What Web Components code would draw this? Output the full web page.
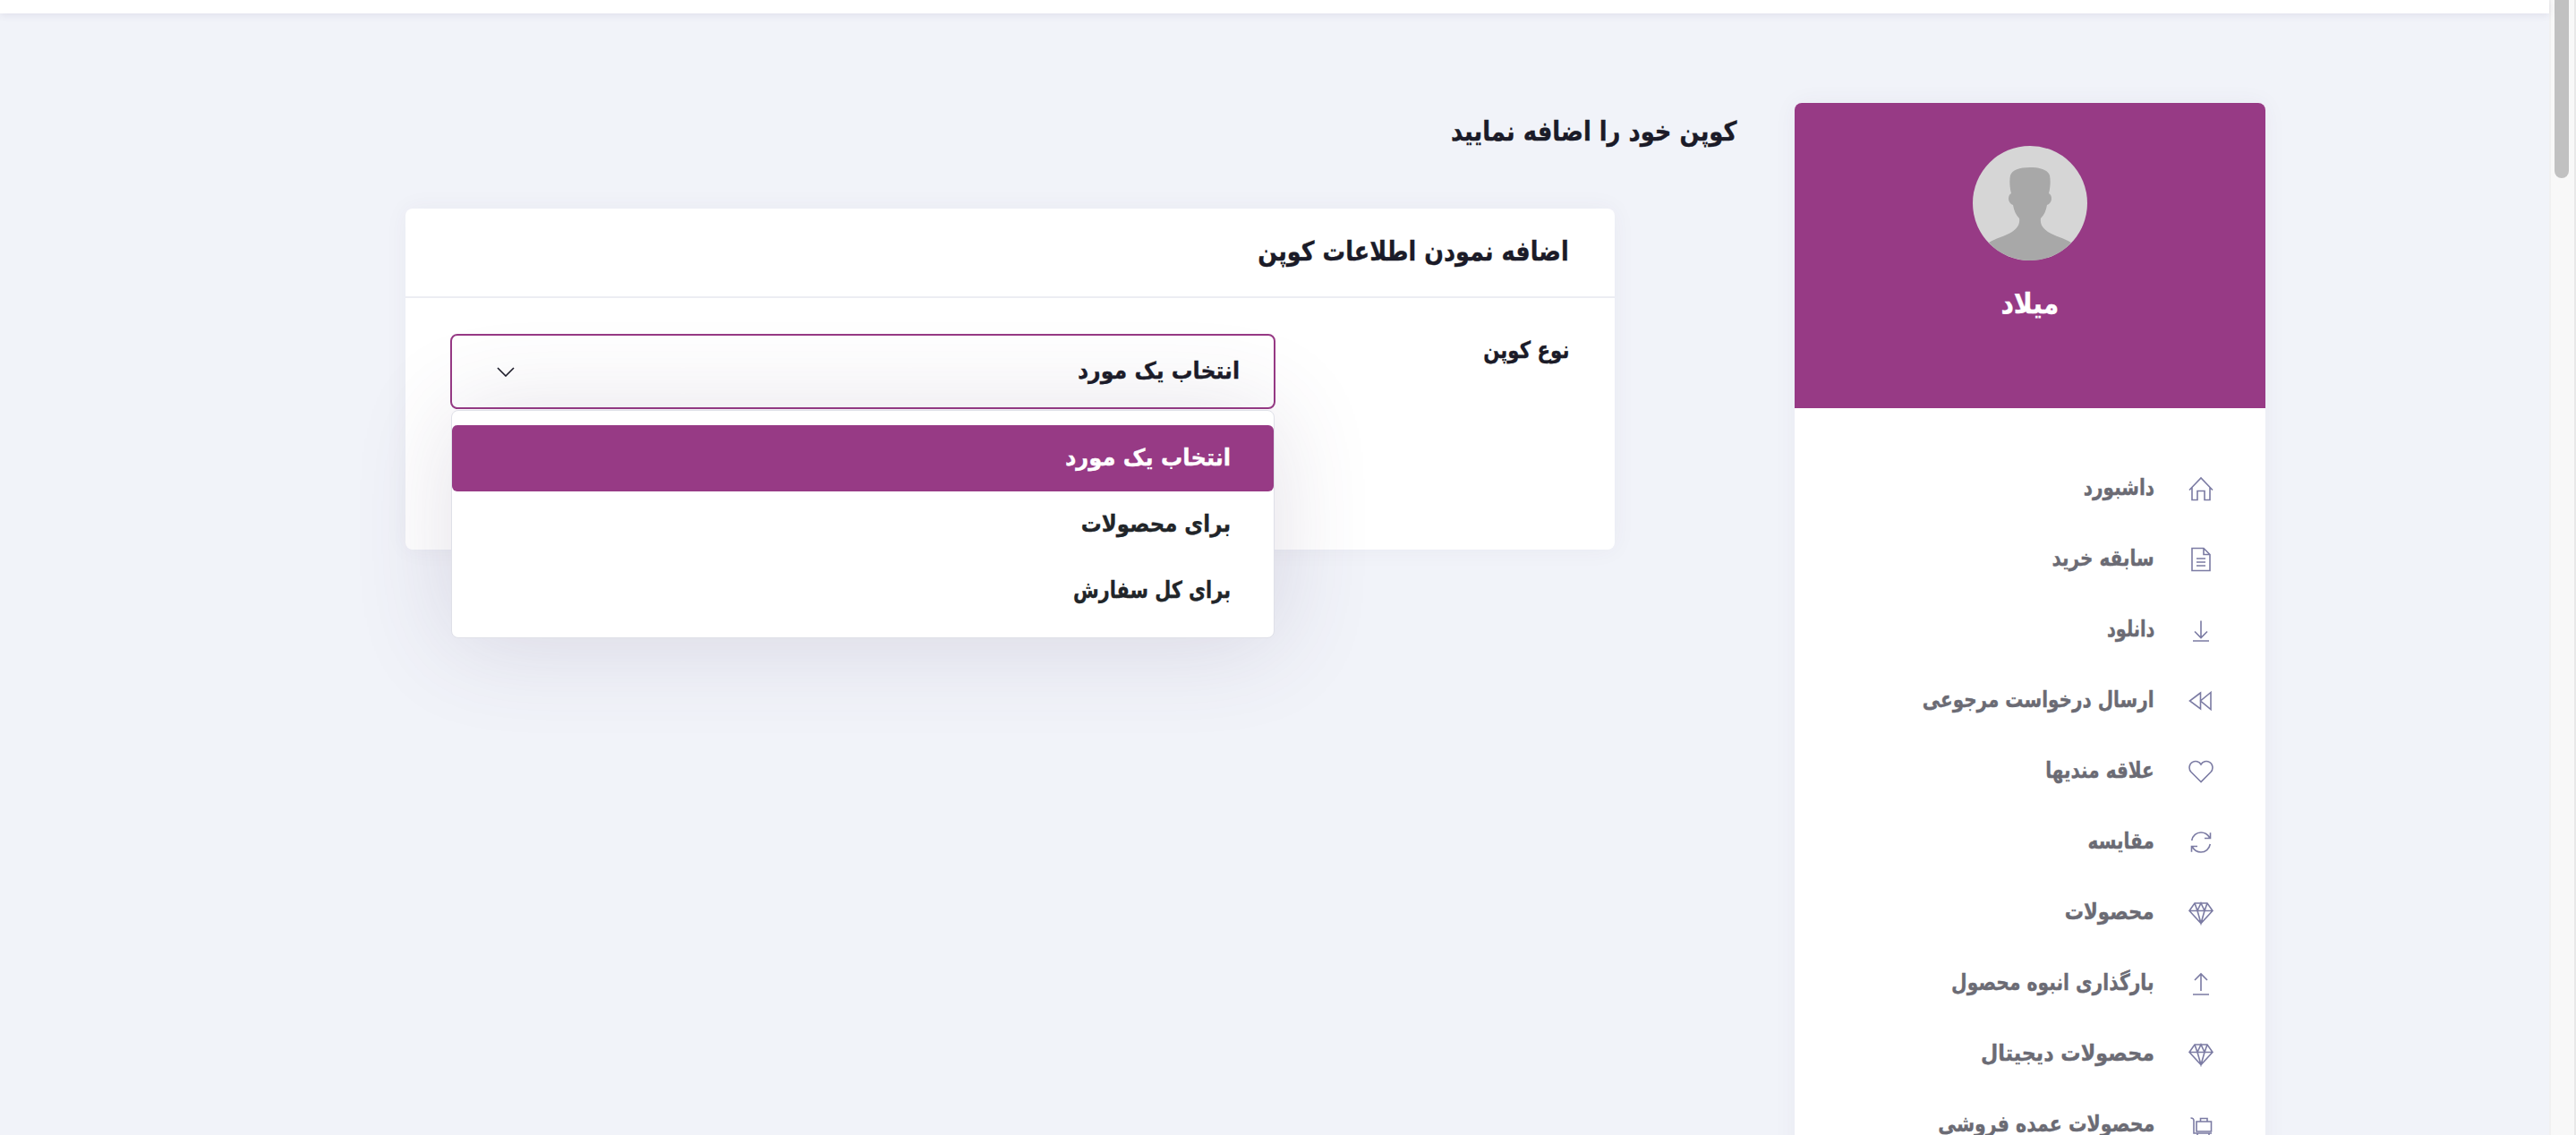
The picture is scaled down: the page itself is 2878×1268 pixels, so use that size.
<!DOCTYPE html>
<html lang="fa" dir="rtl">
<head>
<meta charset="utf-8">
<title>کوپن</title>
<style>
  html, body { margin: 0; height: 100%; overflow: hidden; }
  body { font-family: "DejaVu Sans", sans-serif; }
</style>
</head>
<body>
<coupon-app>
  <fake-scrollbar></fake-scrollbar>
  <page-view>
    <site-topbar></site-topbar>
    <page-body>
      <user-sidebar name="میلاد">
        <side-item icon="home">داشبورد</side-item>
        <side-item icon="doc">سابقه خرید</side-item>
        <side-item icon="download" sx=".77">دانلود</side-item>
        <side-item icon="backward">ارسال درخواست مرجوعی</side-item>
        <side-item icon="heart">علاقه مندیها</side-item>
        <side-item icon="sync">مقایسه</side-item>
        <side-item icon="gem" sx=".85">محصولات</side-item>
        <side-item icon="upload" sx=".81">بارگذاری انبوه محصول</side-item>
        <side-item icon="gem" sx=".89">محصولات دیجیتال</side-item>
        <side-item icon="cart" sx=".82">محصولات عمده فروشی</side-item>
      </user-sidebar>
      <coupon-main heading="کوپن خود را اضافه نمایید">
        <coupon-card heading="اضافه نمودن اطلاعات کوپن">
          <form-row label="نوع کوپن">
            <coupon-select>
              <select-option selected sx=".93">انتخاب یک مورد</select-option>
              <select-option sx=".88">برای محصولات</select-option>
              <select-option sx=".8">برای کل سفارش</select-option>
            </coupon-select>
          </form-row>
        </coupon-card>
      </coupon-main>
    </page-body>
  </page-view>
</coupon-app>

<script>
// 아이콘 경로 (28x28)
const ICONS = {
  home: 'M1 15.5L14 2L27 15.5M4 12.5V26.5H10V16.5H18V26.5H24V12.5',
  doc: 'M4 1.5H17L24 8.5V26.5H4ZM17 1.5V8.5H24M9 13H19M9 17H19M9 21H19',
  download: 'M14 3.5V22.5M7 15.5L14 22.5L21 15.5M5 26H23',
  backward: 'M13.5 5L1.5 14L13.5 23ZM25 4.5L13.5 14L25 23.5Z',
  heart: 'M14 25.5L3 14.5C-.2 11 .7 5.5 4.6 3.4C8 1.6 12 2.8 14 6C16 2.8 20 1.6 23.4 3.4C27.3 5.5 28.2 11 25 14.5Z',
  sync: 'M3.7 12C4.7 6.5 9 3 14 3C18 3 21.5 5 23.8 9M24.5 3.2V9.5H18M24.3 16C23.3 21.5 19 25 14 25C10 25 6.5 23 4.2 19M3.5 24.8V18.5H10',
  gem: 'M7 3H21L27 11.5L14 25.5L1 11.5ZM1 11.5H27M7 3L10 11.5L14 25.5L18 11.5L21 3M10 11.5L14 3L18 11.5',
  upload: 'M14 3V22M7 10L14 3L21 10M5 26H23',
  cart: 'M2.5 6C5 6 6 7 6 9V23H26M9 10H25.5V21H9ZM13.5 10V6.5H21V10M10 23V26M23 23V26'
};

// DejaVu is wider than the original Persian face, so text is narrowed to the same width
const narrow = `
  .t {
    display: inline-block;
    transform: scaleX(var(--sx, 1));
    transform-origin: right center;
    white-space: nowrap;
    -webkit-text-stroke: .35px currentColor;
  }`;

class CouponApp extends HTMLElement {
  constructor() {
    super();
    this.attachShadow({ mode: 'open' }).innerHTML = `
<style>
  :host { display: flex; height: 100vh; overflow: hidden; background: #f1f3f9; }
</style>
<slot></slot>`;
  }
}

class FakeScrollbar extends HTMLElement {
  constructor() {
    super();
    this.attachShadow({ mode: 'open' }).innerHTML = `
<style>
  :host {
    display: block;
    flex: 0 0 30px;
    box-sizing: border-box;
    background: #f8f8f8;
    border-right: 2px solid #e8e8e8;
    border-left: 2px solid #f1f1f1;
    padding: 0 6px 0 4px;
  }
  .thumb { height: 199px; background: #c1c1c1; border-radius: 0 0 8px 8px; }
</style>
<div class="thumb"></div>`;
  }
}

class PageView extends HTMLElement {
  constructor() {
    super();
    this.attachShadow({ mode: 'open' }).innerHTML = `
<style>
  :host { display: block; flex: 1; min-width: 0; }
</style>
<slot></slot>`;
  }
}

class SiteTopbar extends HTMLElement {
  constructor() {
    super();
    this.attachShadow({ mode: 'open' }).innerHTML = `
<style>
  :host {
    display: block;
    height: 15px;
    background: #fff;
    box-shadow: 0 2px 8px rgba(82, 63, 105, .1);
  }
</style>`;
  }
}

class PageBody extends HTMLElement {
  constructor() {
    super();
    this.attachShadow({ mode: 'open' }).innerHTML = `
<style>
  :host { display: flex; gap: 64px; padding: 100px 317px 0 0; align-items: flex-start; }
</style>
<slot></slot>`;
  }
}

class UserSidebar extends HTMLElement {
  constructor() {
    super();
    const name = this.getAttribute('name');
    this.attachShadow({ mode: 'open' }).innerHTML = `
<style>
  ${narrow}
  :host {
    display: block;
    flex: 0 0 526px;
    background: #fff;
    border-radius: 8px 8px 0 0;
    box-shadow: 0 0 26px rgba(82, 63, 105, .05);
  }
  .head {
    height: 341px;
    box-sizing: border-box;
    padding-top: 48px;
    background: #973a85;
    border-radius: 8px 8px 0 0;
    display: flex;
    flex-direction: column;
    align-items: center;
  }
  svg { display: block; }
  .name {
    margin-top: 24px;
    color: #fff;
    font-size: 32px;
    line-height: 48px;
    font-weight: 700;
    transform: scaleX(.88);
    -webkit-text-stroke: .35px currentColor;
  }
  .menu { padding: 50px 58px 0 0; }
</style>
<div class="head">
  <svg width="128" height="128" viewBox="0 0 128 128">
    <circle cx="64" cy="64" r="64" fill="#d6d6d6"/>
    <path fill="#a8a8a8" d="M18 108C26 103 36 101 44 96C50 92 53 87 52 81C48 77 46 72 45 66C42 65 40 62 40 59C40 56 41 54 43 53C41 45 41 38 42 33C44 27 52 24 64 24C76 24 84 27 86 33C87 38 87 45 85 53C87 54 88 56 88 59C88 62 86 65 83 66C82 72 80 77 76 81C75 87 78 92 84 96C92 101 102 103 110 108C100 120 82 128 64 128C46 128 28 120 18 108Z"/>
  </svg>
  <div class="name">${name}</div>
</div>
<div class="menu"><slot></slot></div>`;
  }
}

class SideItem extends HTMLElement {
  constructor() {
    super();
    const d = ICONS[this.getAttribute('icon')];
    const ratio = this.getAttribute('sx') || '.8';
    this.attachShadow({ mode: 'open' }).innerHTML = `
<style>
  ${narrow}
  :host {
    display: flex;
    align-items: center;
    gap: 38px;
    height: 79px;
    color: #6b6b74;
    font-size: 25px;
    font-weight: 700;
    --sx: ${ratio};
  }
  svg { flex: none; display: block; }
  path { fill: none; stroke: #7b7ba3; stroke-width: 1.6; }
  .t { margin-bottom: 2px; }
</style>
<svg width="28" height="28" viewBox="0 0 28 28"><path d="${d}"/></svg>
<span class="t"><slot></slot></span>`;
  }
}

class CouponMain extends HTMLElement {
  constructor() {
    super();
    const heading = this.getAttribute('heading');
    this.attachShadow({ mode: 'open' }).innerHTML = `
<style>
  ${narrow}
  :host { display: block; flex: 1; min-width: 0; }
  h1 {
    margin: 0 0 54px;
    color: #1b1b28;
    font-size: 30px;
    line-height: 64px;
    font-weight: 700;
    --sx: .86;
  }
</style>
<h1><span class="t">${heading}</span></h1>
<slot></slot>`;
  }
}

class CouponCard extends HTMLElement {
  constructor() {
    super();
    const heading = this.getAttribute('heading');
    this.attachShadow({ mode: 'open' }).innerHTML = `
<style>
  ${narrow}
  :host {
    display: block;
    width: 1351px;
    margin-right: 137px;
    background: #fff;
    border-radius: 8px;
    box-shadow: 0 0 26px rgba(82, 63, 105, .05);
  }
  .head {
    height: 98px;
    box-sizing: content-box;
    display: flex;
    align-items: center;
    padding: 0 51px;
    border-bottom: 2px solid #ecedf3;
  }
  h2 { margin: 0 0 3px; color: #1b1b28; font-size: 30px; font-weight: 700; --sx: .85; }
  .body { padding: 40px 51px 157px 50px; }
</style>
<div class="head"><h2><span class="t">${heading}</span></h2></div>
<div class="body"><slot></slot></div>`;
  }
}

class FormRow extends HTMLElement {
  constructor() {
    super();
    const label = this.getAttribute('label');
    this.attachShadow({ mode: 'open' }).innerHTML = `
<style>
  ${narrow}
  :host { display: flex; align-items: flex-start; }
  label {
    flex: 0 0 328px;
    color: #1b1b28;
    font-size: 26px;
    line-height: 36px;
    font-weight: 700;
    --sx: .82;
  }
</style>
<label><span class="t">${label}</span></label>
<slot></slot>`;
  }
}

class CouponSelect extends HTMLElement {
  constructor() {
    super();
    const current = this.querySelector('select-option[selected]').textContent;
    this.attachShadow({ mode: 'open' }).innerHTML = `
<style>
  ${narrow}
  :host { display: block; position: relative; flex: 1; }
  .toggle {
    box-sizing: border-box;
    height: 84px;
    display: flex;
    align-items: center;
    justify-content: space-between;
    padding: 0 38px 0 50px;
    border: 2px solid #973a85;
    border-radius: 8px;
    background: #fff;
    color: #1b1b28;
    font-size: 26px;
    font-weight: 700;
    --sx: .91;
  }
  .toggle .t { margin-bottom: 2px; }
  svg { display: block; flex: none; }
  .menu {
    position: absolute;
    top: 85px;
    left: 1px;
    right: 1px;
    box-sizing: border-box;
    height: 255px;
    padding: 16px 0;
    background: #fff;
    border: 1px solid #dfe0e8;
    border-radius: 8px;
    box-shadow: 0 4px 110px rgba(82, 63, 105, .16);
  }
</style>
<div class="toggle">
  <span class="t">${current}</span>
  <svg width="20" height="11" viewBox="0 0 20 11"><path d="M1 1L10 10L19 1" fill="none" stroke="#1b1b28" stroke-width="1.6"/></svg>
</div>
<div class="menu"><slot></slot></div>`;
  }
}

class SelectOption extends HTMLElement {
  constructor() {
    super();
    const ratio = this.getAttribute('sx') || '.9';
    this.attachShadow({ mode: 'open' }).innerHTML = `
<style>
  ${narrow}
  :host {
    display: flex;
    align-items: center;
    height: 74px;
    padding-right: 48px;
    border-radius: 6px;
    color: #212529;
    font-size: 26px;
    font-weight: 700;
    --sx: ${ratio};
  }
  :host([selected]) { background: #973a85; color: #fff; }
  .t { margin-bottom: 3px; }
</style>
<span class="t"><slot></slot></span>`;
  }
}

customElements.define('coupon-app', CouponApp);
customElements.define('fake-scrollbar', FakeScrollbar);
customElements.define('page-view', PageView);
customElements.define('site-topbar', SiteTopbar);
customElements.define('page-body', PageBody);
customElements.define('user-sidebar', UserSidebar);
customElements.define('side-item', SideItem);
customElements.define('coupon-main', CouponMain);
customElements.define('coupon-card', CouponCard);
customElements.define('form-row', FormRow);
customElements.define('coupon-select', CouponSelect);
customElements.define('select-option', SelectOption);
</script>
</body>
</html>
